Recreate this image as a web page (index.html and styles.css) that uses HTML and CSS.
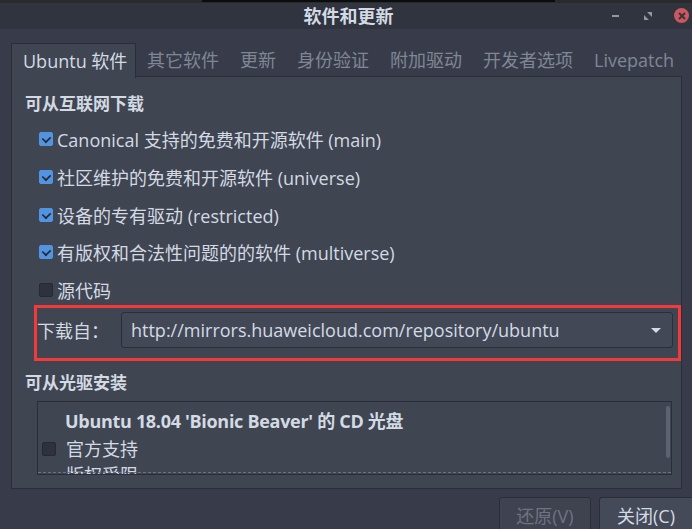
FILE: index.html
```html
<!DOCTYPE html>
<html lang="zh-CN">
<head>
    <meta charset="UTF-8">
    <meta name="viewport" content="width=device-width, initial-scale=1.0">
    <title>软件和更新</title>
    <link rel="stylesheet" href="styles.css">
</head>
<body>

    <!-- Strip of the desktop above the window -->
    <div class="top-strip"><span class="top-strip-line"></span></div>

    <!-- Title bar -->
    <div class="titlebar">
        <span class="title">软件和更新</span>
        <div class="title-buttons">
            <span class="btn-min"></span>
            <svg class="btn-max" width="8" height="8" viewBox="0 0 8 8">
                <path d="M3 0 H8 V5 Z M0 3 L5 8 H0 Z" fill="#8f98a5"/>
            </svg>
            <span class="btn-close">
                <svg width="8" height="8" viewBox="0 0 8 8">
                    <path d="M1 1 L7 7 M7 1 L1 7" stroke="#2f343f" stroke-width="1.8"/>
                </svg>
            </span>
        </div>
    </div>

    <div class="window-body">

        <!-- Tabs -->
        <div class="tabs">
            <div class="tab active">Ubuntu 软件</div>
            <div class="tab">其它软件</div>
            <div class="tab">更新</div>
            <div class="tab">身份验证</div>
            <div class="tab">附加驱动</div>
            <div class="tab">开发者选项</div>
            <div class="tab">Livepatch</div>
        </div>

        <div class="panel">
            <div class="heading">可从互联网下载</div>

            <div class="check-list">
                <label class="check-row"><span class="check on"></span>Canonical 支持的免费和开源软件 (main)</label>
                <label class="check-row"><span class="check on"></span>社区维护的免费和开源软件 (universe)</label>
                <label class="check-row"><span class="check on"></span>设备的专有驱动 (restricted)</label>
                <label class="check-row"><span class="check on"></span>有版权和合法性问题的的软件 (multiverse)</label>
                <label class="check-row"><span class="check"></span>源代码</label>
            </div>

            <!-- Download server (highlighted) -->
            <div class="mirror-box">
                <span class="mirror-label">下载自：</span>
                <div class="combo">
                    <span>http://mirrors.huaweicloud.com/repository/ubuntu</span>
                    <span class="combo-arrow"></span>
                </div>
            </div>

            <div class="heading heading-cd">可从光驱安装</div>

            <div class="cd-list">
                <div class="cd-title">Ubuntu 18.04 'Bionic Beaver' 的 CD 光盘</div>
                <div class="cd-row"><span class="check"></span>官方支持</div>
                <div class="cd-row cd-indent">版权受限</div>
                <span class="scroll-thumb"></span>
            </div>
        </div>

        <!-- Dialog buttons -->
        <div class="footer">
            <button class="dlg-btn" disabled>还原(V)</button>
            <button class="dlg-btn">关闭(C)</button>
        </div>
    </div>

</body>
</html>
```
FILE: styles.css
```css
body {
    margin: 0;
    width: 692px;
    height: 529px;
    overflow: hidden;
    background-color: #383c4a;
    color: #d3dae3;
    font-family: "Open Sans", "Noto Sans CJK SC", sans-serif;
    font-size: 18px;
}

.top-strip {
    height: 3px;
    background-color: #2a2a2b;
    display: flex;
}

.top-strip-line {
    margin-left: 202px;
    width: 353px;
    height: 2px;
    background-color: #0a0c0e;
}

.titlebar {
    height: 26px;
    background-color: #2f343f;
    display: flex;
    align-items: center;
    justify-content: center;
    position: relative;
}

.title {
    font-weight: bold;
    font-size: 18px;
    color: #d3dae3;
    line-height: 26px;
    margin-left: 5px;
}

.title-buttons {
    position: absolute;
    right: 3px;
    top: 5px;
    display: flex;
    align-items: center;
}

.btn-min {
    width: 7px;
    height: 2px;
    background-color: #8f98a5;
    margin-right: 25px;
}

.btn-max {
    margin-right: 22px;
}

.btn-close {
    width: 15px;
    height: 15px;
    border-radius: 50%;
    background-color: #cc575d;
    display: flex;
    align-items: center;
    justify-content: center;
}

.window-body {
    padding: 14px 0 0 11px;
}

/* Tabs */
.tabs {
    display: flex;
    height: 34px;
    position: relative;
    z-index: 1;
}

.tab {
    padding: 0 10px 0 11px;
    line-height: 34px;
    color: #7f8794;
    white-space: nowrap;
}

.tab.active {
    padding: 0 8px 0 11px;
    width: 125px;
    box-sizing: border-box;
    background-color: #404552;
    color: #d3dae3;
    border: 1px solid #2b2e39;
    border-bottom: none;
    line-height: 34px;
    height: 35px;
}

.panel {
    width: 671px;
    height: 413px;
    box-sizing: border-box;
    margin-top: -1px;
    background-color: #404552;
    border: 1px solid #2b2e39;
    padding: 16px 0 0 13px;
}

.heading {
    font-weight: bold;
    line-height: 22px;
    font-size: 17px;
}

.heading-cd {
    margin-top: 11px;
}

.check-list {
    display: flex;
    flex-direction: column;
    gap: 13.75px;
    margin-top: 12px;
    padding-left: 14px;
}

.check-row {
    display: flex;
    align-items: center;
    height: 24px;
    white-space: nowrap;
}

.check {
    width: 14px;
    height: 14px;
    box-sizing: border-box;
    border-radius: 2px;
    background-color: #2f323c;
    border: 1px solid #262932;
    margin-right: 4px;
    flex: none;
    position: relative;
}

.check.on {
    background-color: #5294e2;
    border-color: #5294e2;
}

.check.on::after {
    content: "";
    position: absolute;
    left: 3px;
    top: 1px;
    width: 5px;
    height: 7px;
    border-right: 2px solid #262932;
    border-bottom: 2px solid #262932;
    transform: rotate(45deg) scale(0.85);
}

/* Mirror selector with red highlight */
.mirror-box {
    margin: 3px 0 0 9px;
    width: 647px;
    box-sizing: border-box;
    border: 3px solid #f23a3a;
    padding: 4px 5px 10px 0;
    display: flex;
    align-items: center;
}

.mirror-label {
    width: 84px;
    flex: none;
}

.combo {
    flex: 1;
    height: 36px;
    box-sizing: border-box;
    border: 1px solid #2b2e39;
    border-radius: 3px;
    background-color: #434857;
    display: flex;
    align-items: center;
    justify-content: space-between;
    padding: 0 11px 0 9px;
    white-space: nowrap;
}

.combo-arrow {
    width: 0;
    height: 0;
    border-left: 5px solid transparent;
    border-right: 5px solid transparent;
    border-top: 5px solid #d3dae3;
}

/* CD list */
.cd-list {
    position: relative;
    margin: 7px 0 0 12px;
    width: 635px;
    height: 74px;
    box-sizing: border-box;
    border: 1px solid #2b2e39;
    overflow: hidden;
    padding-top: 8px;
}

.cd-list::after {
    content: "";
    position: absolute;
    left: 0;
    right: 0;
    bottom: 1px;
    border-bottom: 1px dashed #6c7281;
}

.cd-title {
    font-weight: bold;
    line-height: 22px;
    padding-left: 27px;
    letter-spacing: -0.3px;
    white-space: nowrap;
}

.cd-row {
    display: flex;
    align-items: center;
    line-height: 22px;
    margin-top: 6px;
    padding-left: 4px;
}

.cd-row .check {
    margin-right: 10px;
}

.cd-indent {
    padding-left: 28px;
    margin-top: 4px;
}

.scroll-thumb {
    position: absolute;
    right: 1px;
    top: 4px;
    width: 4px;
    height: 52px;
    border-radius: 2px;
    background-color: #5c6271;
}

/* Footer buttons */
.footer {
    display: flex;
    justify-content: flex-end;
    gap: 8px;
    margin-top: 8px;
}

.dlg-btn {
    height: 36px;
    width: 92px;
    font-family: inherit;
    font-size: 18px;
    color: #d3dae3;
    background-color: #444a58;
    border: 1px solid #2b2e39;
    border-radius: 3px;
    padding: 0;
}

.dlg-btn:disabled {
    color: #6d7381;
    background-color: #3f4350;
}

.dlg-btn:last-child {
    width: 93px;
    border-right: none;
    border-radius: 3px 0 0 3px;
}
```
